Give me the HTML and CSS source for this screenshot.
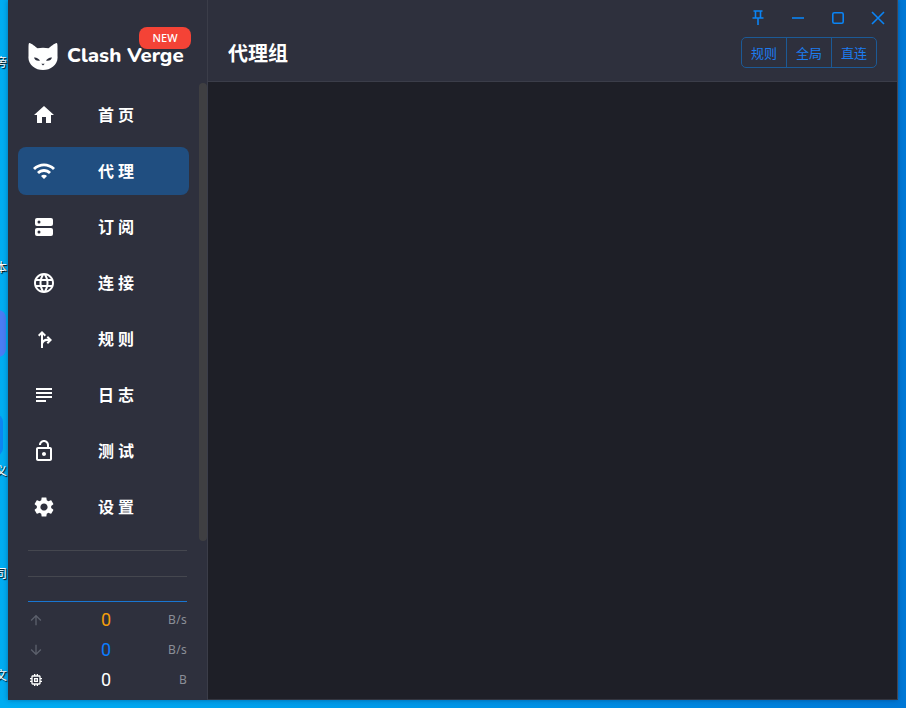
FILE: index.html
```html
<!DOCTYPE html>
<html lang="zh-CN">
<head>
<meta charset="utf-8">
<title>Clash Verge</title>
<link rel="stylesheet" href="styles.css">
</head>
<body>
<div class="desktop">
  <span class="frag f1">旁</span>
  <span class="frag f2">本</span>
  <span class="frag f3">义</span>
  <span class="frag f4">司</span>
  <span class="frag f5">文</span>
  <span class="tile t1"></span>
  <span class="tile t2"></span>
</div>
<div class="window">
  <aside class="sidebar">
    <div class="logo">
      <svg class="cat" viewBox="0 0 30 28" width="30" height="28">
        <path fill="#fff" d="M1.5 1 C3 1 8 5 9.5 6.3 C12.5 5.5 17.5 5.5 20.5 6.3 C22 5 27 1 28.5 1 C29.5 1 29.5 3 29.5 6 L29.5 14 C30.5 22 23 28 15 28 C7 28 -.5 22 .5 14 L.5 6 C.5 3 .5 1 1.5 1 Z"/>
        <path fill="#2e303d" d="M6 15.5 C8 15 11 16.5 12 18.5 C9.5 19.5 6.5 18 6 15.5 Z M24 15.5 C22 15 19 16.5 18 18.5 C20.5 19.5 23.5 18 24 15.5 Z M13.3 21.8 H16.7 L15 23.6 Z"/>
      </svg>
      <span class="brand">Clash Verge</span>
      <span class="badge">NEW</span>
    </div>
    <nav class="nav">
      <a class="item"><svg class="ico" viewBox="0 0 24 24"><path d="M10 20v-6h4v6h5v-8h3L12 3 2 12h3v8z"/></svg><span class="label">首页</span></a>
      <a class="item active"><svg class="ico" viewBox="0 0 24 24"><path d="M1 9l2 2c4.97-4.97 13.03-4.97 18 0l2-2C16.93 2.93 7.08 2.93 1 9zm8 8l3 3 3-3c-1.65-1.66-4.34-1.66-6 0zm-4-4l2 2c2.76-2.76 7.24-2.76 10 0l2-2C15.14 9.14 8.87 9.14 5 13z"/></svg><span class="label">代理</span></a>
      <a class="item"><svg class="ico" viewBox="0 0 24 24"><rect x="3" y="3" width="18" height="8" rx="2"/><rect x="3" y="13" width="18" height="8" rx="2"/><circle class="hole" cx="7" cy="7" r="1.5"/><circle class="hole" cx="7" cy="17" r="1.5"/></svg><span class="label">订阅</span></a>
      <a class="item"><svg class="ico" viewBox="0 0 24 24"><path d="M11.99 2C6.47 2 2 6.48 2 12s4.47 10 9.99 10C17.52 22 22 17.52 22 12S17.52 2 11.99 2zm6.93 6h-2.95c-.32-1.25-.78-2.45-1.38-3.56 1.84.63 3.37 1.91 4.33 3.56zM12 4.04c.83 1.2 1.48 2.53 1.91 3.96h-3.82c.43-1.43 1.08-2.76 1.91-3.96zM4.26 14C4.1 13.36 4 12.69 4 12s.1-1.36.26-2h3.38c-.08.66-.14 1.32-.14 2 0 .68.06 1.34.14 2H4.26zm.82 2h2.95c.32 1.25.78 2.45 1.38 3.56-1.84-.63-3.37-1.9-4.33-3.56zm2.95-8H5.08c.96-1.66 2.49-2.93 4.33-3.56C8.81 5.55 8.35 6.75 8.03 8zM12 19.96c-.83-1.2-1.48-2.53-1.91-3.96h3.82c-.43 1.43-1.08 2.76-1.91 3.96zM14.34 14H9.66c-.09-.66-.16-1.32-.16-2 0-.68.07-1.35.16-2h4.68c.09.65.16 1.32.16 2 0 .68-.07 1.34-.16 2zm.25 5.56c.6-1.11 1.06-2.31 1.38-3.56h2.95c-.96 1.65-2.49 2.93-4.33 3.56zM16.36 14c.08-.66.14-1.32.14-2 0-.68-.06-1.34-.14-2h3.38c.16.64.26 1.31.26 2s-.1 1.36-.26 2h-3.38z"/></svg><span class="label">连接</span></a>
      <a class="item"><svg class="ico" viewBox="0 0 24 24"><path d="M14.59 15.59 16 17l4-4-4-4-1.41 1.41L16.17 12c-1.51-.33-3.46-.23-5.17 1.06V7.83l1.59 1.59L14 8l-4-4-4 4 1.41 1.41L9 7.83V21h2v-4c.73-2.58 3.07-3.47 5.17-3l-1.58 1.59z"/></svg><span class="label">规则</span></a>
      <a class="item"><svg class="ico" viewBox="0 0 24 24"><path d="M14 17H4v2h10v-2zm6-8H4v2h16V9zM4 15h16v-2H4v2zM4 5v2h16V5H4z"/></svg><span class="label">日志</span></a>
      <a class="item"><svg class="ico" viewBox="0 0 24 24"><path d="M18 8h-1V6c0-2.76-2.24-5-5-5S7 3.24 7 6h2c0-1.66 1.34-3 3-3s3 1.34 3 3v2H6c-1.1 0-2 .9-2 2v10c0 1.1.9 2 2 2h12c1.1 0 2-.9 2-2V10c0-1.1-.9-2-2-2zm0 12H6V10h12v10zm-6-3c1.1 0 2-.9 2-2s-.9-2-2-2-2 .9-2 2 .9 2 2 2z"/></svg><span class="label">测试</span></a>
      <a class="item"><svg class="ico" viewBox="0 0 24 24"><path d="M19.14 12.94c.04-.3.06-.61.06-.94 0-.32-.02-.64-.07-.94l2.03-1.58c.18-.14.23-.41.12-.61l-1.92-3.32c-.12-.22-.37-.29-.59-.22l-2.39.96c-.5-.38-1.03-.7-1.62-.94l-.36-2.54c-.04-.24-.24-.41-.48-.41h-3.84c-.24 0-.43.17-.47.41l-.36 2.54c-.59.24-1.13.57-1.62.94l-2.39-.96c-.22-.08-.47 0-.59.22L2.74 8.87c-.12.21-.08.47.12.61l2.03 1.58c-.05.3-.09.63-.09.94s.02.64.07.94l-2.03 1.58c-.18.14-.23.41-.12.61l1.92 3.32c.12.22.37.29.59.22l2.39-.96c.5.38 1.03.7 1.62.94l.36 2.54c.05.24.24.41.48.41h3.84c.24 0 .44-.17.47-.41l.36-2.54c.59-.24 1.13-.56 1.62-.94l2.39.96c.22.08.47 0 .59-.22l1.92-3.32c.12-.22.07-.47-.12-.61l-2.01-1.58zM12 15.6c-1.98 0-3.6-1.62-3.6-3.6s1.62-3.6 3.6-3.6 3.6 1.62 3.6 3.6-1.62 3.6-3.6 3.6z"/></svg><span class="label">设置</span></a>
      <span class="thumb"></span>
    </nav>
    <div class="rules">
      <hr class="rule">
      <hr class="rule">
      <hr class="rule rule-blue">
    </div>
    <div class="traffic">
      <svg class="tico dim" viewBox="0 0 24 24"><path d="M4 12l1.41 1.41L11 7.83V20h2V7.83l5.58 5.59L20 12l-8-8-8 8z"/></svg>
      <span class="val up">0</span><span class="unit">B/s</span>
      <svg class="tico dim" viewBox="0 0 24 24"><path d="M20 12l-1.41-1.41L13 16.17V4h-2v12.17l-5.58-5.59L4 12l8 8 8-8z"/></svg>
      <span class="val down">0</span><span class="unit">B/s</span>
      <svg class="tico" viewBox="0 0 24 24"><path d="M15 9H9v6h6V9zm-2 4h-2v-2h2v2zm8-2V9h-2V7c0-1.1-.9-2-2-2h-2V3h-2v2h-2V3H9v2H7c-1.1 0-2 .9-2 2v2H3v2h2v2H3v2h2v2c0 1.1.9 2 2 2h2v2h2v-2h2v2h2v-2h2c1.1 0 2-.9 2-2v-2h2v-2h-2v-2h2zm-4 6H7V7h10v10z"/></svg>
      <span class="val">0</span><span class="unit">B</span>
    </div>
  </aside>
  <main class="main">
    <header class="header">
      <div class="controls">
        <button class="ctl"><svg viewBox="0 0 16 16" width="16" height="16"><path d="M3.5 1h9M5.5 1v6.5M10.5 1v6.5M2.5 8h11M8 8v7"/></svg></button>
        <button class="ctl"><svg viewBox="0 0 16 16" width="16" height="16"><path d="M2 8h12"/></svg></button>
        <button class="ctl"><svg viewBox="0 0 16 16" width="16" height="16"><rect x="2.8" y="2.8" width="10.4" height="10.4" rx="1.5"/></svg></button>
        <button class="ctl"><svg viewBox="0 0 16 16" width="16" height="16"><path d="M2 2l12 12M14 2L2 14"/></svg></button>
      </div>
      <div class="bar">
        <h1 class="title">代理组</h1>
        <div class="group">
          <button class="seg">规则</button>
          <button class="seg">全局</button>
          <button class="seg">直连</button>
        </div>
      </div>
    </header>
    <section class="content"></section>
  </main>
</div>
</body>
</html>
```
FILE: styles.css
```css
* { box-sizing: border-box; }
html, body { margin: 0; height: 100%; }
body {
  position: relative;
  overflow: hidden;
  background: linear-gradient(90deg, #00adf2 0%, #0090e4 60%, #0078d6 100%);
  font-family: "Noto Sans CJK SC", "Noto Sans", sans-serif;
  padding-left: 8px;
}
.desktop { position: absolute; inset: 0; overflow: hidden; }
.frag {
  position: absolute;
  left: -5px;
  font-size: 12px;
  line-height: 14px;
  color: #fff;
  text-shadow: 1px 1px 1px #000;
}
.f1 { top: 55px; }
.f2 { top: 260px; }
.f3 { top: 464px; }
.f4 { top: 566px; }
.f5 { top: 668px; }
.tile { position: absolute; left: -30px; width: 36px; border-radius: 8px; }
.t1 { top: 310px; height: 47px; background: #4a7df4; }
.t2 { top: 414px; height: 42px; left: -33px; background: #0c86f2; }

.window {
  position: relative;
  display: flex;
  width: 890px;
  height: 700px;
  box-shadow: 0 0 5px rgba(0, 40, 90, .45);
}
.sidebar {
  position: relative;
  display: flex;
  flex-direction: column;
  width: 200px;
  flex: none;
  background: #2e303d;
  border-right: 1px solid #3b3d49;
}
.logo { position: relative; display: flex; align-items: center; height: 83px; padding: 14px 0 0 20px; flex: none; }
.cat { flex: none; margin-top: 15px; }
.brand {
  margin: 12px 0 0 9px;
  font-family: "Nunito", "Lato", sans-serif;
  font-size: 20.4px;
  font-weight: 800;
  line-height: 28px;
  color: #fff;
  white-space: nowrap;
}
.badge {
  position: absolute;
  left: 131px;
  top: 27px;
  width: 52px;
  height: 22px;
  border-radius: 8px;
  background: #f44336;
  color: #fff;
  font-family: "Noto Sans", sans-serif;
  font-size: 11px;
  font-weight: 500;
  line-height: 22px;
  text-align: center;
}
.nav {
  position: relative;
  display: flex;
  flex-direction: column;
  gap: 8px;
  height: 458px;
  padding: 8px 10px 0 10px;
  flex: none;
}
.item {
  display: flex;
  align-items: center;
  width: 171px;
  height: 48px;
  padding-left: 14px;
  border-radius: 8px;
  color: #fff;
}
.item.active { background: #204e80; }
.ico { width: 24px; height: 24px; fill: #fff; flex: none; }
.ico .hole { fill: #2e303d; }
.label {
  margin: 0 0 2px 42px;
  font-size: 16px;
  font-weight: 700;
  letter-spacing: 4px;
  line-height: 24px;
}
.thumb {
  position: absolute;
  right: 0;
  top: 0;
  width: 8px;
  height: 458px;
  border-radius: 4px;
  background: #3f3f42;
}
.rules { padding: 9px 20px 0 20px; flex: none; }
.rule { display: block; height: 1px; margin: 0 0 25px; border: 0; background: #45474f; }
.rule-blue { margin: -1px 0 0; background: #1976d2; }
.traffic {
  display: grid;
  grid-template-columns: 16px 1fr 30px;
  grid-auto-rows: 30px;
  align-items: center;
  padding: 3px 20px 0 20px;
  flex: none;
}
.tico { width: 16px; height: 16px; fill: #fff; }
.tico.dim { fill: #5c606c; }
.val {
  justify-self: center;
  margin: -2px 0 0 11px;
  font-family: "Roboto", sans-serif;
  font-size: 18px;
  color: #fff;
}
.val.up { color: #f59e0b; }
.val.down { color: #0a7cff; }
.unit {
  justify-self: end;
  margin-top: -2px;
  font-family: "Noto Sans", sans-serif;
  font-size: 12px;
  color: #8b8f98;
  letter-spacing: .3px;
}
.main {
  display: flex;
  flex-direction: column;
  flex: 1;
  min-width: 0;
  border-right: 1px solid #43454f;
  border-bottom: 1px solid #33353f;
}
.header { flex: none; height: 82px; background: #2e303d; border-bottom: 1px solid #3b3d49; }
.controls { display: flex; justify-content: flex-end; height: 34px; margin-right: -1px; }
.ctl {
  display: flex;
  align-items: center;
  justify-content: center;
  width: 40px;
  height: 34px;
  padding: 2px 0 0;
  border: 0;
  background: none;
}
.ctl svg { fill: none; stroke: #0a84f5; stroke-width: 1.6; }
.bar { display: flex; align-items: center; justify-content: space-between; padding: 3px 20px 0 20px; height: 37px; }
.title {
  margin: -3px 0 0;
  font-size: 20px;
  font-weight: 700;
  line-height: 30px;
  color: #fff;
}
.group { display: flex; height: 31px; border: 1px solid #1c5a96; border-radius: 5px; margin-top: -3px; }
.seg {
  width: 45px;
  height: 29px;
  padding: 0;
  border: 0;
  border-left: 1px solid #1c5a96;
  background: none;
  color: #1c7cf0;
  font-family: "Noto Sans CJK SC", sans-serif;
  font-size: 13px;
  line-height: 29px;
}
.seg:first-child { width: 44px; border-left: 0; }
.content { flex: 1; background: #1e1f27; }
```
